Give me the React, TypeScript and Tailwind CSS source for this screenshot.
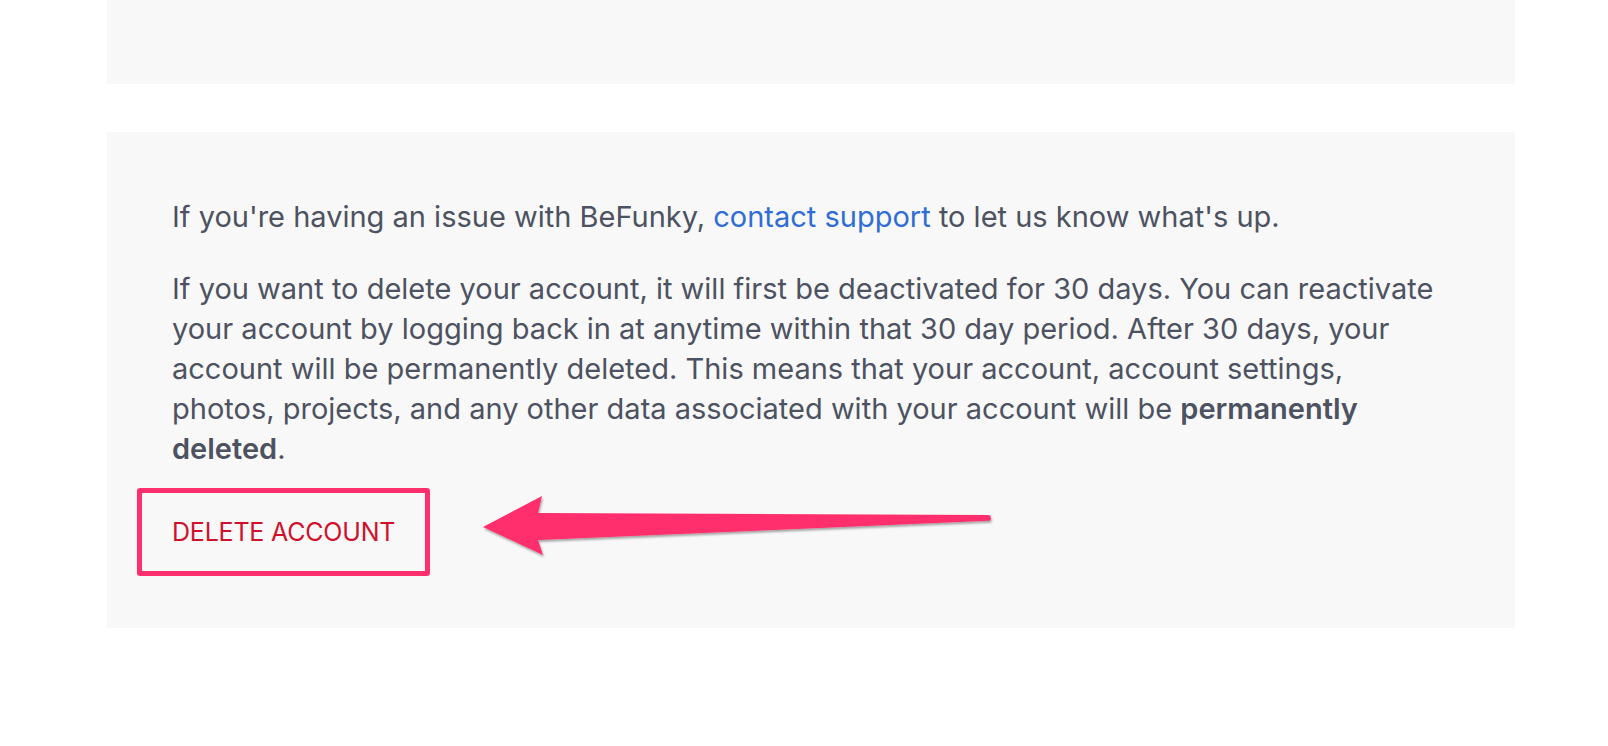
import React from "react";

export default function App() {
  return (
    <div className="relative w-[1608px] h-[746px] bg-white overflow-hidden" style={{ fontFamily: "Inter, 'Noto Sans', sans-serif" }}>
      <div className="ml-[107px] w-[1408px] h-[84px] bg-[#f8f8f8]" />
      <div className="ml-[107px] mt-[48px] w-[1408px] h-[496px] bg-[#f8f8f8] pl-[65px] pt-[65px]">
        <p className="text-[29px] leading-[40px] text-[#4d5261] whitespace-nowrap">
          If you're having an issue with BeFunky, <a className="text-[#2f6dd5]">contact support</a> to let us know what's up.
        </p>
        <p className="mt-[32px] text-[29px] leading-[40px] text-[#4d5261] whitespace-nowrap">
          If you want to delete your account, it will first be deactivated for 30 days. You can reactivate
          <br />
          your account by logging back in at anytime within that 30 day period. After 30 days, your
          <br />
          account will be permanently deleted. This means that your account, account settings,
          <br />
          photos, projects, and any other data associated with your account will be <b className="font-semibold">permanently</b>
          <br />
          <b className="font-semibold">deleted</b>.
        </p>
        <button className="-ml-[35px] mt-[19px] h-[88px] w-[293px] border-[5px] border-[#ff2e6c] rounded-[3px] pl-[30px] text-left text-[25px] leading-none text-[#d0112b] tracking-[-0.2px]">
          DELETE ACCOUNT
        </button>
      </div>
      <svg className="absolute left-[470px] top-[485px]" width="540" height="80" viewBox="0 0 540 80">
        <defs>
          <filter id="sh" x="-5%" y="-30%" width="110%" height="160%">
            <feDropShadow dx="1" dy="2" stdDeviation="1.2" floodColor="#000" floodOpacity="0.35" />
          </filter>
        </defs>
        <path
          d="M13 42 L72 11 L68 28 L518 30 A2.9 2.9 0 0 1 518 35.8 L68 55 L73 70 Z"
          fill="#ff2e6c"
          filter="url(#sh)"
        />
      </svg>
    </div>
  );
}
